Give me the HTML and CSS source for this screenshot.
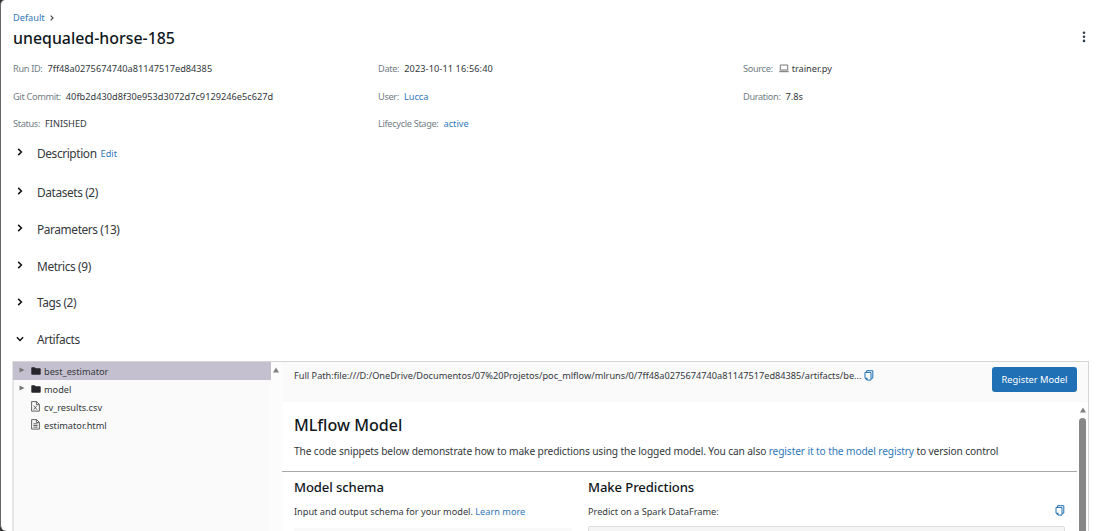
FILE: index.html
```html
<!DOCTYPE html>
<html lang="en">
<head>
<meta charset="utf-8">
<title>unequaled-horse-185</title>
<link rel="stylesheet" href="styles.css">
</head>
<body>
<svg width="0" height="0" class="defs">
  <symbol id="chev" viewBox="0 0 8 8"><path d="M2.2 0.9 5.4 4 2.2 7.1" fill="none" stroke="currentColor" stroke-width="1.5"/></symbol>
  <symbol id="copy" viewBox="0 0 10 11"><path d="M2.6 2.4V.7H8.8V8.2H7.2M1 2.4H7V10.1H3L1 8.2Z" fill="none" stroke="currentColor" stroke-width="1"/><path d="M1 7.7H3.5V10.3Z" fill="currentColor"/></symbol>
  <symbol id="folder" viewBox="0 0 10 8"><path d="M.3 1Q.3.2 1 .2H3.6L4.8 1.2H8.9Q9.7 1.2 9.7 2V7Q9.7 7.8 8.9 7.8H1.1Q.3 7.8.3 7Z" fill="currentColor"/></symbol>
</svg>
<main class="window">
  <nav class="crumbs"><a>Default</a><svg class="crumb-arrow"><use href="#chev"/></svg></nav>
  <header class="title-row">
    <h1>unequaled-horse-185</h1>
    <svg class="kebab" viewBox="0 0 4 12"><circle cx="2" cy="1.7" r="1.3"/><circle cx="2" cy="5.8" r="1.3"/><circle cx="2" cy="9.9" r="1.3"/></svg>
  </header>
  <section class="meta">
    <div><span class="label">Run ID:</span><span class="value hash">7ff48a0275674740a81147517ed84385</span></div>
    <div><span class="label">Date:</span><span class="value date">2023-10-11 16:56:40</span></div>
    <div><span class="label">Source:</span><svg class="laptop" viewBox="0 0 10 9"><path d="M1.3 1H8.7V6H1.3Z" fill="none" stroke="#777" stroke-width="1"/><path d="M.2 6.8H9.8V8.2H.2Z" fill="#888"/></svg><span class="value">trainer.py</span></div>
    <div><span class="label">Git Commit:</span><span class="value hash">40fb2d430d8f30e953d3072d7c9129246e5c627d</span></div>
    <div><span class="label">User:</span><a class="value">Lucca</a></div>
    <div><span class="label">Duration:</span><span class="value">7.8s</span></div>
    <div><span class="label">Status:</span><span class="value">FINISHED</span></div>
    <div><span class="label">Lifecycle Stage:</span><a class="value">active</a></div>
  </section>
  <section class="sections">
    <div class="sec first"><svg class="chev"><use href="#chev"/></svg><h2>Description</h2><a class="edit">Edit</a></div>
    <div class="sec"><svg class="chev"><use href="#chev"/></svg><h2>Datasets (2)</h2></div>
    <div class="sec"><svg class="chev"><use href="#chev"/></svg><h2>Parameters (13)</h2></div>
    <div class="sec"><svg class="chev"><use href="#chev"/></svg><h2>Metrics (9)</h2></div>
    <div class="sec"><svg class="chev"><use href="#chev"/></svg><h2>Tags (2)</h2></div>
    <div class="sec"><svg class="chev open"><use href="#chev"/></svg><h2>Artifacts</h2></div>
  </section>
  <section class="artifacts">
    <ul class="tree">
      <li class="selected"><svg class="tri" viewBox="0 0 6 6"><path d="M.5.5 5.5 3 .5 5.5Z"/></svg><svg class="folder"><use href="#folder"/></svg><span>best_estimator</span></li>
      <li><svg class="tri" viewBox="0 0 6 6"><path d="M.5.5 5.5 3 .5 5.5Z"/></svg><svg class="folder"><use href="#folder"/></svg><span>model</span></li>
      <li class="file"><svg class="doc" viewBox="0 0 9 11"><path d="M.6.6H5.6L8.4 3.4V10.1H.6ZM5.4.6V3.6H8.4M2.7 4.6 6 8.7M6 4.6 2.7 8.7"/></svg><span>cv_results.csv</span></li>
      <li class="file"><svg class="doc" viewBox="0 0 9 11"><path d="M.6.6H5.6L8.4 3.4V10.1H.6ZM5.4.6V3.6H8.4M2.4 4.8H6.6M2.4 6.5H6.6M2.4 8.2H6.6"/></svg><span>estimator.html</span></li>
    </ul>
    <div class="gutter"><svg viewBox="0 0 8 6"><path d="M4 .6 7 5.4H1Z"/></svg></div>
    <div class="pane">
      <div class="pane-head">
        <span class="path">Full Path:file:///D:/OneDrive/Documentos/07%20Projetos/poc_mlflow/mlruns/0/7ff48a0275674740a81147517ed84385/artifacts/be...</span>
        <svg class="copy"><use href="#copy"/></svg>
        <button>Register Model</button>
      </div>
      <div class="pane-body">
        <div class="content">
          <div class="intro">
            <h3>MLflow Model</h3>
            <p>The code snippets below demonstrate how to make predictions using the logged model. You can also <a>register it to the model registry</a> to version control</p>
          </div>
          <div class="cols">
            <div class="schema">
              <h4>Model schema</h4>
              <p>Input and output schema for your model. <a>Learn more</a></p>
              <div class="table-head"></div>
            </div>
            <div class="predict">
              <h4>Make Predictions</h4>
              <div class="predict-line"><p>Predict on a Spark DataFrame:</p><svg class="copy"><use href="#copy"/></svg></div>
              <div class="code"></div>
            </div>
          </div>
        </div>
        <div class="scrollbar"><svg viewBox="0 0 8 6"><path d="M4 .6 7 5.4H1Z"/></svg><i></i></div>
      </div>
    </div>
  </section>
</main>
</body>
</html>
```
FILE: styles.css
```css
* { box-sizing: border-box; }
body { margin: 0; background: #333; font-family: "Noto Sans", sans-serif; font-size: 9.2px; color: #34383c; overflow: hidden; }
h1, h2, h3, h4, p, ul { margin: 0; padding: 0; font-weight: 400; }
a { color: #3178b9; }
svg { display: block; flex: none; }
.defs { position: absolute; }
.window { height: 531px; overflow: hidden; background: #fff; border-left: 1px solid #666; border-radius: 5px 0 0 6px; padding: 9px 11px 0 12px; white-space: nowrap; display: flex; flex-direction: column; }
.crumbs, .title-row, .meta, .sections { flex-shrink: 0; }
.crumbs { display: flex; align-items: center; height: 16px; gap: 4px; }
.crumb-arrow { width: 6px; height: 6px; margin-top: 1px; color: #444; }
.title-row { display: flex; align-items: center; justify-content: space-between; height: 24px; margin-top: 1px; }
h1 { font-size: 15.9px; font-weight: 500; color: #11171c; }
.kebab { width: 4px; height: 12px; margin: -2px 3px 0 0; fill: #33404c; }
.meta { display: grid; grid-template-columns: 365px 365px 1fr; grid-auto-rows: 27.3px; margin-top: 5.3px; }
.meta div { display: flex; align-items: center; }
.label { color: #737d85; margin-right: 5px; letter-spacing: -.33px; }
.hash { letter-spacing: .02px; }
.date { letter-spacing: .1px; }
.laptop { width: 10px; height: 9px; margin: 0 3px 0 1px; }
.sec { display: flex; align-items: center; height: 36.8px; }
.first { height: 36.4px; padding-bottom: 5px; }
.chev { width: 8px; height: 8px; margin: -1px 12px 0 3px; color: #111; }
.open { transform: rotate(90deg); }
h2 { font-size: 11.9px; letter-spacing: -.4px; margin-left: 1px; }
.edit { margin-left: 4px; margin-top: 2px; }
.artifacts { display: flex; flex: 1; min-height: 0; border: 1px solid #d5d5d5; border-left: 2px solid #e5e5e5; border-bottom: 0; margin: 3.4px 0 0 -1px; background: #fafafa; }
.tree { width: 257px; list-style: none; }
.tree li { display: flex; align-items: center; height: 18px; padding-left: 5px; }
.tree .selected { background: #c5c0cf; margin-left: -1px; padding-left: 6px; }
.tree span { margin-top: 1px; }
.tri { width: 6px; height: 6px; margin: -2px 6px 0 0; fill: #777; }
.folder { width: 10px; height: 8px; margin-right: 3px; margin-top: 1px; color: #25252b; }
.tree .file { padding-left: 17px; }
.doc { width: 9px; height: 11px; margin-right: 4px; fill: none; stroke: #555; stroke-width: .9; }
.gutter { width: 11px; padding: 5px 0 0 1px; background: #fcfcfc; }
.gutter svg, .scrollbar svg { width: 8px; height: 6px; fill: #808080; }
.pane { flex: 1; display: flex; flex-direction: column; }
.pane-head { height: 40px; flex-shrink: 0; display: flex; align-items: flex-start; padding: 5px 11px 0 12px; }
.path { margin-top: 2px; line-height: 13px; }
.copy { width: 10px; height: 11px; color: #2272b4; }
.pane-head .copy { margin: 3px 0 0 3px; }
button { margin-left: auto; width: 85px; height: 25px; border: 0; border-radius: 3px; background: #2070b5; color: #fff; font: 9.3px "Noto Sans", sans-serif; padding: 0; }
.pane-body { flex: 1; min-height: 0; display: flex; background: #fff; }
.content { width: 795px; }
.intro { height: 70px; padding: 11px 12px 0; border-bottom: 1px solid #aaa; }
h3 { font-size: 16.1px; line-height: 24px; font-weight: 500; color: #11171c; }
.intro p { font-size: 10.2px; letter-spacing: -.122px; line-height: 16px; margin-top: 6px; }
.cols { display: flex; padding-left: 12px; }
.schema { width: 294px; }
.predict { width: 477px; }
h4 { font-size: 13.1px; letter-spacing: -.1px; line-height: 20px; font-weight: 500; color: #11171c; margin-top: 5px; }
.cols p { line-height: 14px; margin-top: 8px; }
.predict-line { display: flex; justify-content: space-between; }
.predict-line .copy { margin-top: 8px; }
.table-head { width: 278px; height: 10px; background: #f9f9f9; margin-top: 9px; }
.code { height: 12px; border: 1px solid #ddd; background: #f5f5f5; margin-top: 7px; border-radius: 2px; }
.scrollbar { flex: 1; padding: 5px 0 0 2px; }
.scrollbar i { display: block; width: 7px; height: 130px; margin-top: 5px; border-radius: 4px; background: #878787; }
```
